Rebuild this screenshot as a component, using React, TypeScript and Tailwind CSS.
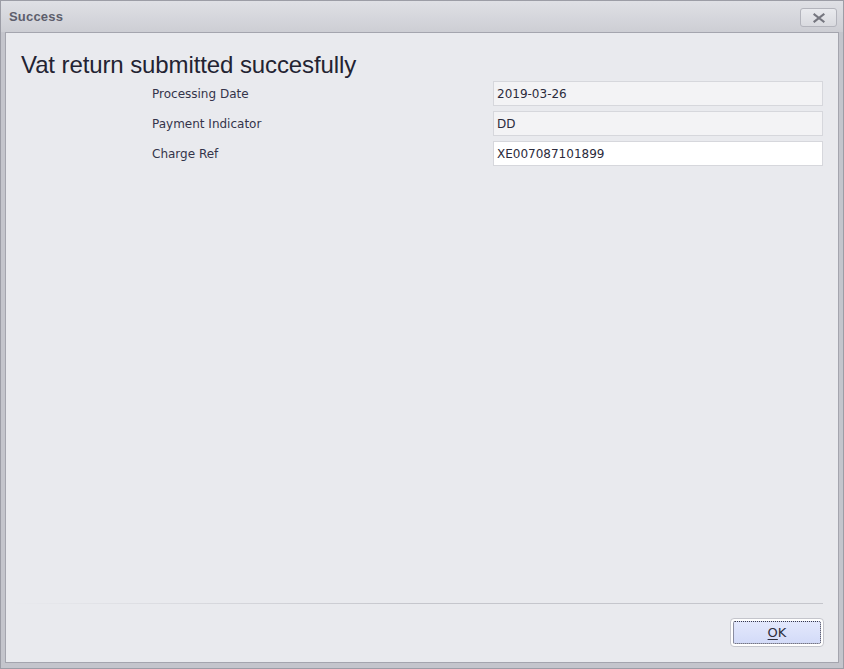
const fields = [
  { label: 'Processing Date', value: '2019-03-26', readOnly: true },
  { label: 'Payment Indicator', value: 'DD', readOnly: true },
  { label: 'Charge Ref', value: 'XE007087101899', readOnly: false },
]

function CloseIcon() {
  return (
    <svg width="12" height="10" viewBox="0 0 12 10">
      <path d="M1.5 1.5 L10.5 8.5 M10.5 1.5 L1.5 8.5" stroke="#75767f" strokeWidth="2.2" strokeLinecap="square" />
    </svg>
  )
}

export default function App() {
  return (
    <div className="w-[844px] h-[669px] flex flex-col bg-[#c4c5cc] border border-[#9c9da6] font-['Liberation_Sans',Tahoma,sans-serif]">
      {/* title bar */}
      <div className="h-[31px] shrink-0 flex items-center justify-between pl-[8px] pr-[6px] bg-gradient-to-b from-[#dfe0e5] to-[#cdced4]">
        <span className="text-[13px] font-bold text-[#5d5e6c] tracking-[0.2px]">Success</span>
        <button className="w-[37px] h-[19px] mt-[2px] flex items-center justify-center rounded-[3px] border border-[#b3b4bc] bg-gradient-to-b from-[#e9eaee] to-[#d9dadf]">
          <CloseIcon />
        </button>
      </div>

      {/* client area */}
      <div className="flex-1 flex flex-col mx-[4px] mb-[5px] border border-[#a4a5ae] bg-[#e9eaee]">
        <div className="flex-1 px-[15px] pt-[18px]">
          <h1 className="text-[24px] leading-[28px] text-[#232332] tracking-[-0.1px]">
            Vat return submitted succesfully
          </h1>
          <div className="mt-[2px] flex flex-col gap-[5px] font-['DejaVu_Sans',Tahoma,sans-serif]">
            {fields.map((f) => (
              <div key={f.label} className="flex items-center h-[25px]">
                <span className="w-[472px] pl-[131px] text-[12px] text-[#34344a] shrink-0">{f.label}</span>
                <div
                  className={
                    f.readOnly
                      ? 'w-[330px] h-[25px] flex items-center px-[3px] border border-[#d6d7dc] bg-[#f3f3f5] text-[12px] text-[#2b2b3c]'
                      : 'w-[330px] h-[25px] flex items-center px-[3px] border border-[#d6d7dc] bg-white text-[12px] text-[#2b2b3c]'
                  }
                >
                  {f.value}
                </div>
              </div>
            ))}
          </div>
        </div>

        {/* footer */}
        <div className="h-[1px] ml-[4px] mr-[15px] bg-gradient-to-r from-[#e9eaee] via-[#c5c6cc] to-[#c5c6cc]" />
        <div className="h-[58px] flex items-start justify-end pr-[14px] pt-[14px]">
          <button className="w-[94px] h-[29px] rounded-[4px] border border-[#c4c5cc] bg-white p-[2px]">
            <span className="w-full h-full flex items-center justify-center rounded-[2px] border border-dotted border-[#3a3a48] bg-gradient-to-b from-[#e3e8fc] to-[#d3dbf8] text-[13px] text-[#2e2e3c] font-['DejaVu_Sans',Tahoma,sans-serif]">
              <span className="underline underline-offset-2">O</span>K
            </span>
          </button>
        </div>
      </div>
    </div>
  )
}
